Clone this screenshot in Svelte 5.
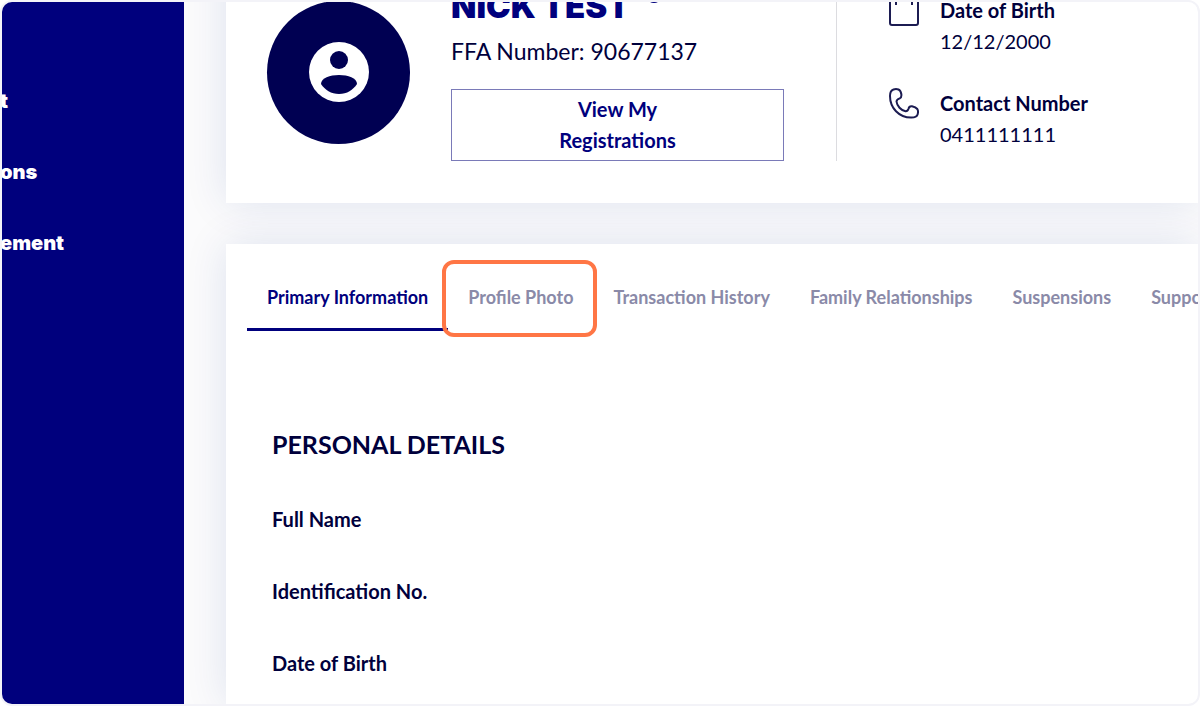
<script lang="ts">
  type Tab = { id: string; label: string; highlighted?: boolean };

  const navItems = ['t', 'ons', 'ement'];

  const tabs: Tab[] = [
    { id: 'primary', label: 'Primary Information' },
    { id: 'photo', label: 'Profile Photo', highlighted: true },
    { id: 'transactions', label: 'Transaction History' },
    { id: 'family', label: 'Family Relationships' },
    { id: 'suspensions', label: 'Suspensions' },
    { id: 'support', label: 'Suppo' },
  ];

  const details = ['Full Name', 'Identification No.', 'Date of Birth'];

  let activeTab = $state('primary');
</script>

<div class="frame">
  <aside class="sidebar">
    <nav>
      {#each navItems as item}
        <a href="#{item}">{item}</a>
      {/each}
    </nav>
  </aside>

  <main class="content">
    <section class="card profile">
      <div class="avatar">
        <svg viewBox="0 0 60 60" aria-hidden="true">
          <circle cx="30" cy="30" r="30" fill="#fff" />
          <circle cx="30" cy="18" r="9" />
          <path d="M12 42c0-6 9-9 18-9s18 3 18 9c-4 6-10 10-18 10s-14-4-18-10z" />
        </svg>
      </div>

      <div class="identity">
        <h1>
          NICK TEST
          <svg class="info" viewBox="0 0 16 16" aria-hidden="true">
            <circle cx="8" cy="8" r="7" />
          </svg>
        </h1>
        <p>FFA Number: 90677137</p>
        <button type="button" class="registrations">View My<br />Registrations</button>
      </div>

      <div class="facts-wrap">
        <dl class="facts">
          <div class="fact">
            <svg viewBox="0 0 30 31" aria-hidden="true">
              <rect x="1" y="3" width="28" height="27" rx="2" />
              <path d="M7 0v10M23 0v10" />
            </svg>
            <div>
              <dt>Date of Birth</dt>
              <dd>12/12/2000</dd>
            </div>
          </div>
          <div class="fact">
            <svg viewBox="0 0 30 31" aria-hidden="true">
              <path
                d="M4.500 1.500C6 1 8 1 9.500 1.500C11.500 2.300 12 4 12.300 6C12.600 8 12.500 9.500 11 10.200C9 11 7.500 11.500 7.500 13.500C8 18 12 22.500 16.500 23.300C18.500 23.500 19 22.300 19.500 20.800C20 18.800 21 18 23 18.300C25 18.800 27 19.500 28.300 21C29.200 22.500 29.200 24.500 28.600 26.500C27.800 29 25.500 29.700 22 29.600C10 29.500 1 20 1 8C1 4.500 2 2.300 4.500 1.500Z"
              />
            </svg>
            <div>
              <dt>Contact Number</dt>
              <dd>0411111111</dd>
            </div>
          </div>
        </dl>
      </div>
    </section>

    <section class="card panel">
      <div class="tabs" role="tablist">
        {#each tabs as tab (tab.id)}
          <button
            type="button"
            role="tab"
            class="tab"
            class:active={tab.id === activeTab}
            class:highlighted={tab.highlighted}
            aria-selected={tab.id === activeTab}
            onclick={() => (activeTab = tab.id)}
          >
            {tab.label}
          </button>
        {/each}
      </div>

      <div class="details">
        <h2>PERSONAL DETAILS</h2>
        <ul>
          {#each details as label}
            <li>{label}</li>
          {/each}
        </ul>
      </div>
    </section>
  </main>
</div>

<style>
  :global(body) {
    background: #fff;
  }

  .frame {
    box-sizing: border-box;
    height: 100vh;
    display: flex;
    overflow: hidden;
    border: 2px solid #f3f3f8;
    border-radius: 12px;
    background: #fbfbfc;
    color: #00003c;
    font-family: Lato, 'Liberation Sans', sans-serif;
    font-size: 20px;
    line-height: 31px;
  }

  .sidebar {
    flex: 0 0 182px;
    overflow: hidden;
    background: #00007d;
  }

  nav {
    display: flex;
    flex-direction: column;
    gap: 40px;
    margin-left: -2px;
    padding-top: 84px;
  }

  nav a {
    color: #fff;
    font-family: Inter, sans-serif;
    font-weight: 900;
    text-decoration: none;
  }

  .content {
    flex: 1;
    min-width: 0;
    display: flex;
    flex-direction: column;
    gap: 41px;
    margin-top: -61px;
    padding-left: 42px;
    overflow: hidden;
  }

  .card {
    background: #fff;
    box-shadow: 0 0 40px rgba(20, 50, 140, 0.12);
  }

  .profile {
    display: grid;
    grid-template-columns: 143px minmax(0, 333px) 1fr;
    column-gap: 41px;
    align-items: center;
    padding: 42px 41px;
  }

  .avatar {
    display: flex;
    align-items: center;
    justify-content: center;
    height: 143px;
    border-radius: 50%;
    background: #000052;
  }

  .avatar svg {
    width: 60px;
    height: 60px;
    fill: #000052;
  }

  h1 {
    display: flex;
    gap: 16px;
    margin: 0 0 7px;
    color: #00007d;
    font-family: Inter, sans-serif;
    font-size: 33px;
    font-weight: 900;
    line-height: 46px;
  }

  .info {
    width: 16px;
    height: 16px;
    margin-top: 4px;
    fill: none;
    stroke: #00007d;
    stroke-width: 2;
  }

  .identity p {
    margin: 0 0 22px;
    font-size: 23px;
  }

  .registrations {
    width: 100%;
    padding: 4px;
    border: 1px solid #7a7ab8;
    background: #fff;
    color: #00007d;
    font: inherit;
    font-weight: 700;
  }

  .facts-wrap {
    display: flex;
    align-items: center;
    align-self: stretch;
    margin-left: 11px;
    padding-left: 52px;
    border-left: 1px solid #dcdce0;
  }

  .facts {
    display: flex;
    flex-direction: column;
    gap: 31px;
    margin: 0;
  }

  .fact {
    display: flex;
    gap: 21px;
  }

  .fact svg {
    width: 30px;
    height: 31px;
    fill: none;
    stroke: #1c1c52;
    stroke-width: 2;
  }

  dt {
    font-weight: 700;
  }

  dd {
    margin: 0;
  }

  .panel {
    flex: 1 0 auto;
    padding: 21px;
  }

  .tabs {
    display: flex;
  }

  .tab {
    position: relative;
    flex: none;
    padding: 17px 20px 15px;
    border: 0;
    border-bottom: 3px solid transparent;
    background: none;
    color: #8a8aa8;
    font: inherit;
    font-size: 18px;
    font-weight: 700;
    white-space: nowrap;
  }

  .tab.active {
    border-bottom-color: #00007d;
    color: #00007d;
  }

  /* guide outline drawn over the tab */
  .tab.highlighted::after {
    content: '';
    position: absolute;
    inset: -5px -4px -9px -6px;
    border: 4px solid #ff7645;
    border-radius: 12px;
  }

  .details {
    padding: 98px 25px 0;
  }

  h2 {
    margin: 0 0 44px;
    font-size: 25px;
    font-weight: 700;
    line-height: 31px;
  }

  ul {
    display: flex;
    flex-direction: column;
    gap: 41px;
    margin: 0;
    padding: 0;
    list-style: none;
  }

  li {
    font-weight: 700;
  }
</style>
